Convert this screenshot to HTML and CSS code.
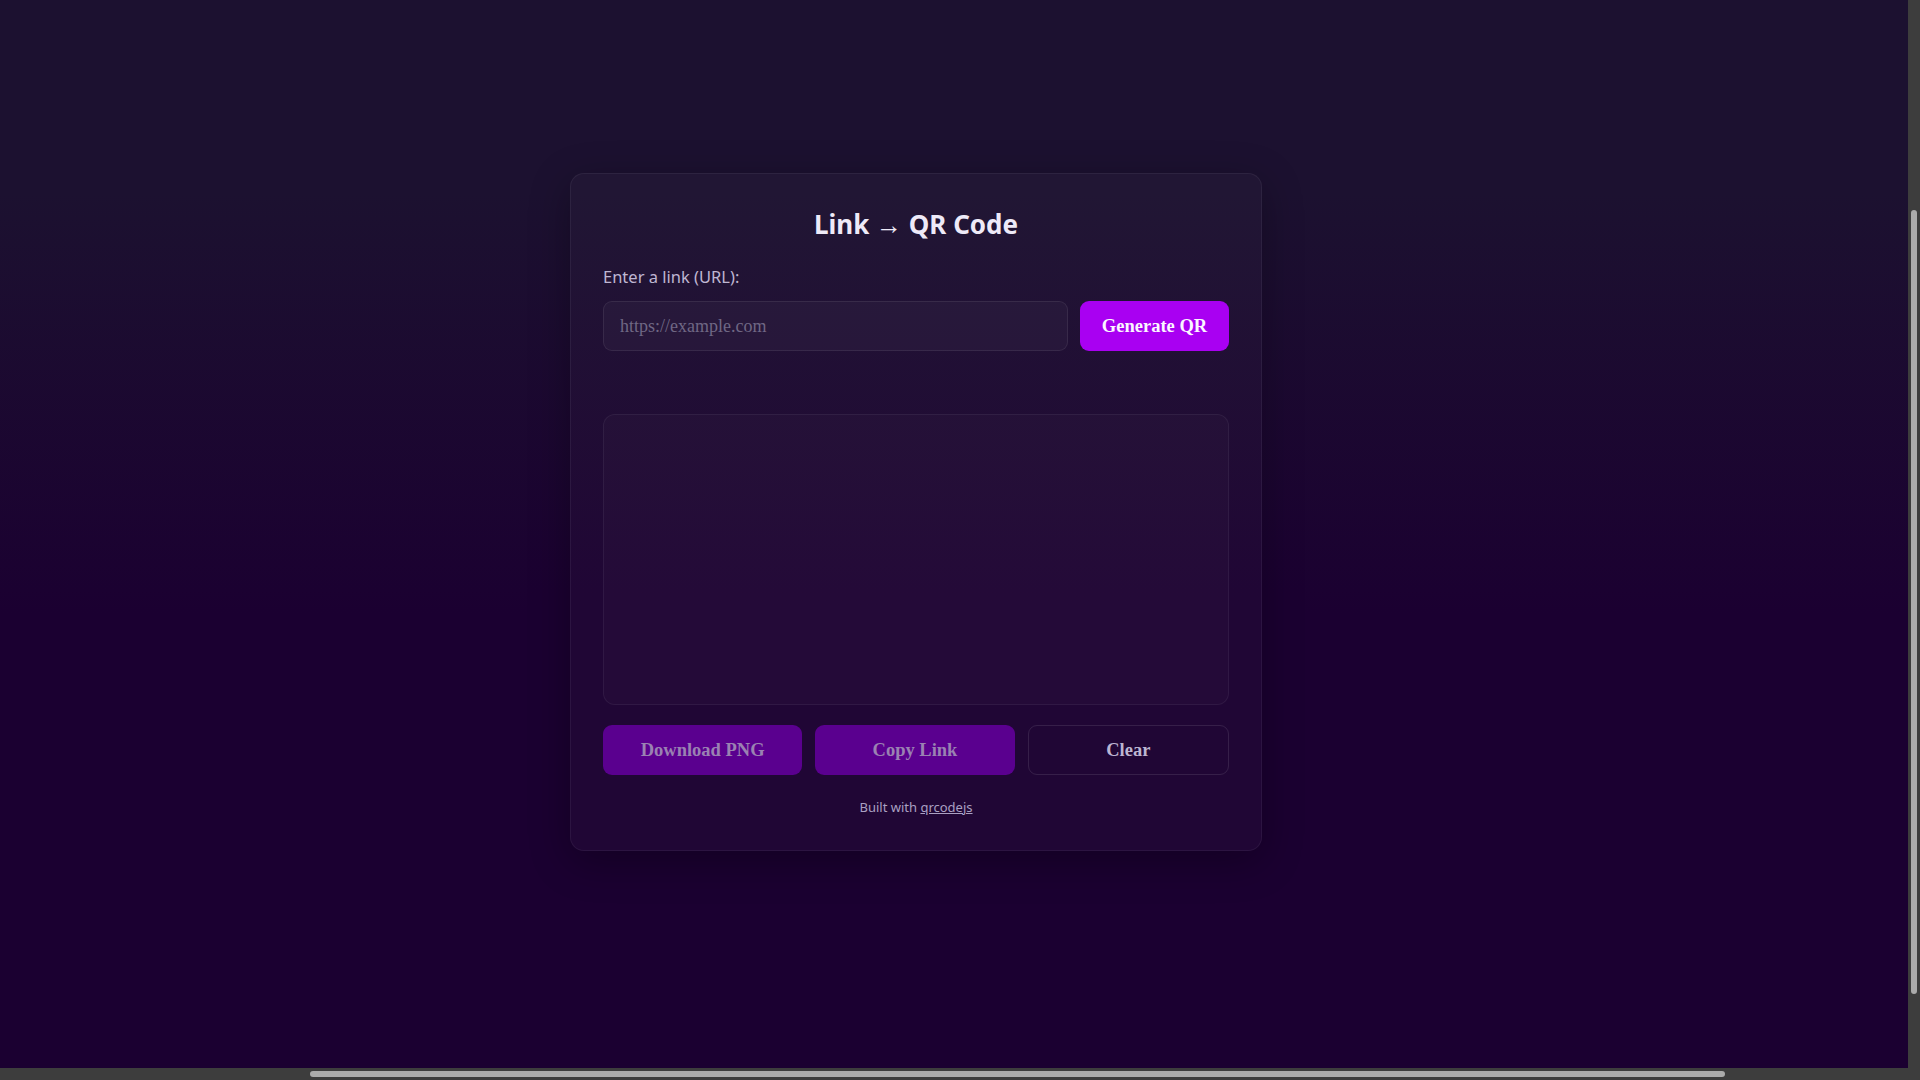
FILE: index.html
```html
<!DOCTYPE html>
<html lang="en">
<head>
<meta charset="utf-8">
<title>Link → QR Code</title>
<link rel="stylesheet" href="styles.css">
</head>
<body>
<div class="viewport" id="viewport">
  <div class="page">
    <main class="card">
      <h1 class="title">Link → QR Code</h1>
      <label class="label" for="url">Enter a link (URL):</label>
      <div class="row">
        <input id="url" class="input" type="text" placeholder="https://example.com">
        <button class="btn btn-primary">Generate QR</button>
      </div>
      <div class="preview"></div>
      <div class="actions">
        <button class="btn btn-primary is-disabled">Download PNG</button>
        <button class="btn btn-primary is-disabled">Copy Link</button>
        <button class="btn btn-ghost">Clear</button>
      </div>
      <p class="footer">Built with <a class="footer-link" href="#">qrcodejs</a></p>
    </main>
  </div>
</div>
<div class="sb sb-v" aria-hidden="true"><div class="sb-thumb sb-thumb-v"></div></div>
<div class="sb sb-h" aria-hidden="true"><div class="sb-thumb sb-thumb-h"></div></div>
<div class="sb sb-corner" aria-hidden="true"></div>
<script src="script.js"></script>
</body>
</html>
```

FILE: styles.css
```css
html,
body {
  margin: 0;
  height: 100%;
  overflow: hidden;
}
body {
  font-family: "Noto Sans", "Open Sans", sans-serif;
  background: #1b0031;
  color: #ece8f6;
}
.viewport {
  width: 100vw;
  height: 100vh;
  overflow: scroll;
  scrollbar-width: none;
}
.viewport::-webkit-scrollbar {
  display: none;
}
.page {
  width: 2668px;
  height: 1596px;
  display: flex;
  justify-content: center;
  align-items: center;
  background: linear-gradient(180deg, #1c1130 0px, #1c1130 480px, #1b0031 900px, #1b0031 100%);
}

/* scrollbars of the window */
.sb {
  position: fixed;
  background: #3d3d3d;
  display: flex;
}
.sb-v {
  top: 0;
  right: 0;
  width: 12px;
  height: calc(100vh - 12px);
  flex-direction: column;
  align-items: center;
  padding-top: 210px;
  box-sizing: border-box;
}
.sb-h {
  left: 0;
  bottom: 0;
  height: 12px;
  width: calc(100vw - 12px);
  align-items: center;
  padding-left: 310px;
  box-sizing: border-box;
}
.sb-corner {
  right: 0;
  bottom: 0;
  width: 12px;
  height: 12px;
}
.sb-thumb {
  background: #ababab;
  border-radius: 3px;
}
.sb-thumb-v {
  width: 6px;
  height: 784px;
}
.sb-thumb-h {
  height: 6px;
  width: 1415px;
}

/* card */
.card {
  width: 692px;
  box-sizing: border-box;
  padding: 32px 32px 34px;
  border: 1px solid rgba(255, 255, 255, 0.06);
  border-radius: 14px;
  background: rgba(255, 255, 255, 0.025);
  box-shadow: 0 10px 40px rgba(0, 0, 0, 0.3);
  display: flex;
  flex-direction: column;
}
.title {
  margin: 0;
  font-size: 26px;
  line-height: 36px;
  font-weight: 700;
  text-align: center;
  color: #eeeaf8;
}
.label {
  margin-top: 25px;
  font-size: 16.5px;
  line-height: 20px;
  color: #bfb6d2;
}
.row {
  margin-top: 14px;
  display: flex;
  gap: 12px;
  height: 50px;
}
.input {
  flex: 1;
  min-width: 0;
  box-sizing: border-box;
  height: 50px;
  padding: 0 16px;
  border: 1px solid rgba(255, 255, 255, 0.08);
  border-radius: 9px;
  background: rgba(255, 255, 255, 0.03);
  color: #e8e4f2;
  font-family: "Liberation Serif", serif;
  font-size: 18px;
  outline: none;
}
.input::placeholder {
  color: #6f6784;
}
.btn {
  height: 50px;
  box-sizing: border-box;
  border-radius: 9px;
  font-family: "Liberation Serif", serif;
  font-size: 18.5px;
  font-weight: 700;
  cursor: pointer;
}
.btn-primary {
  border: none;
  background: #a900f2;
  color: #fbf6ff;
  padding: 0 18px;
}
.row .btn-primary {
  width: 149px;
}
.btn-primary.is-disabled {
  background: #5a008f;
  color: #9a82b2;
}
.btn-ghost {
  border: 1px solid rgba(255, 255, 255, 0.1);
  background: transparent;
  color: #bcb5d1;
}
.preview {
  margin-top: 63px;
  height: 291px;
  box-sizing: border-box;
  border: 1px solid rgba(255, 255, 255, 0.06);
  border-radius: 12px;
  background: rgba(255, 255, 255, 0.018);
}
.actions {
  margin-top: 20px;
  display: flex;
  gap: 13px;
}
.actions .btn {
  flex: 1 1 0;
  min-width: 0;
  padding: 0;
}
.footer {
  margin: 23px 0 0;
  font-size: 13px;
  line-height: 18px;
  text-align: center;
  color: #aaa0c2;
}
.footer-link {
  color: #aaa0c2;
  text-decoration: underline;
}
```

FILE: script.js
```js
(function () {
  var v = document.getElementById('viewport');
  function place() {
    v.scrollLeft = 418;
    v.scrollTop = 286;
  }
  place();
  window.addEventListener('load', place);
})();
```
